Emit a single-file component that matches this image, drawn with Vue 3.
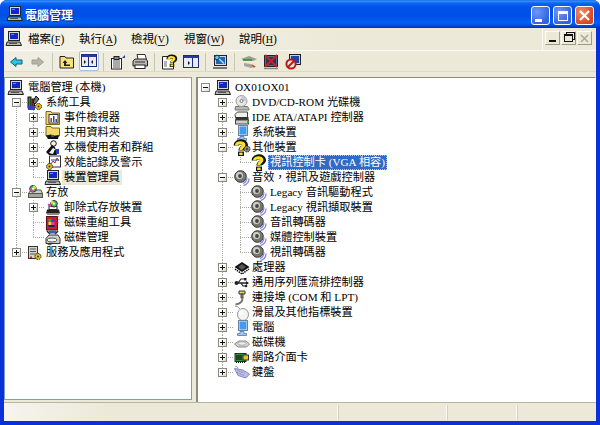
<script setup>
const gear = (x, y, c = '#e8c21c') => `<circle cx="${x}" cy="${y}" r="3" fill="${c}" stroke="#222" stroke-dasharray="1.5 .8"/><circle cx="${x}" cy="${y}" r="1" fill="#333"/>`
const computer = `<rect x="2.5" y="0.5" width="11" height="9" fill="#d6d6d6" stroke="#222"/><rect x="4" y="2" width="8" height="6" fill="#1226c4"/><rect x="5" y="3" width="3" height="1" fill="#5f8cf0"/><path d="M1 11h13l1.500 3.500H0z" fill="#b9b9b0" stroke="#222"/><rect x="3" y="12" width="8" height="1" fill="#555"/>`
const qm = (s = 1, dx = 0, dy = 0) => `<g transform="translate(${dx} ${dy}) scale(${s})"><path d="M3.200 5.600C3.200 .8 12.400 .8 12.400 5C12.400 8 8 7.600 8 10.400" fill="none" stroke="#111" stroke-width="5.200"/><rect x="5" y="11.600" width="6" height="4.400" fill="#111"/><path d="M3.400 5.400C3.800 2 11 2 11 5C11 7 7.800 7 7.800 10" fill="none" stroke="#ffe21e" stroke-width="3"/><rect x="6.200" y="12.600" width="3.400" height="2.400" fill="#ffe21e"/></g>`
const unknown = qm(1, 0, 0)
const speaker = `<circle cx="6.500" cy="6.500" r="5.800" fill="#77776f" stroke="#34342f"/><circle cx="5.500" cy="5.500" r="3.500" fill="#cfcfc8"/><circle cx="6" cy="6" r="1.900" fill="#45453f"/><path d="M12.800 7q.5 4.500-3.800 6.500M15 8.500q0 5.500-5.500 7" fill="none" stroke="#8986dc" stroke-width="1.300"/>`
const drive = `<path d="M1.500 8.500 4 5h10l1.500 3.500v4h-14z" fill="#cfcfc8" stroke="#55554f"/><rect x="1.500" y="8.500" width="14" height="4" fill="#a5a59d" stroke="#55554f"/>`
const cdTop = `<circle cx="6" cy="3.800" r="3.300" fill="#3cc46a" stroke="#333"/><path d="M6 .5a3.300 3.300 0 0 1 3.300 3.300H6z" fill="#e8d828"/><path d="M6 3.800H2.700A3.300 3.300 0 0 0 6 7.100z" fill="#d8479c"/><circle cx="6" cy="3.800" r="1" fill="#fff"/>`
const screen = `<rect x="4.500" y="0.500" width="9" height="10" fill="#e8eef8" stroke="#6f7fa0"/><rect x="5.500" y="1.500" width="7" height="8" fill="#3f9cf0"/><path d="M6 11.500h4v2h2.500v2h-9v-2H6z" fill="#9fc8f4" stroke="#6f8ab0"/>`
const icons = {
  computer,
  tools: `<rect x="1" y="2" width="3" height="11" fill="#3a7a3a" stroke="#111"/><rect x="5" y="4" width="2.500" height="9" fill="#c02525" stroke="#111"/><path d="M9 1l3 3-4 5-2-2z" fill="#777" stroke="#111"/><rect x="1" y="11" width="7" height="4" fill="#3640c0"/>${gear(11.500, 11.500)}`,
  event: `<path d="M1 1.500h5l1 1.500h7.500v11.500H1z" fill="#f4d96a" stroke="#7a6410"/><rect x="4" y="4.500" width="9" height="8.500" fill="#fff" stroke="#333"/><rect x="5.500" y="8" width="1.500" height="4" fill="#c02525"/><rect x="8" y="6" width="1.500" height="6" fill="#2a40c0"/><rect x="10.500" y="9" width="1.500" height="3" fill="#2a40c0"/>`,
  share: `<path d="M1 1.500h5l1 1.500h7.500v8H1z" fill="#f4d96a" stroke="#7a6410"/><path d="M1 10.500l5-1 3 1.500 5-1-1 4H3z" fill="#111"/><rect x="6" y="10" width="3" height="2" fill="#2a40c0"/>`,
  users: `<circle cx="8.500" cy="3.500" r="2.800" fill="#f4f0e0" stroke="#111"/><path d="M1 12 7 5l3 2 2 8H4z" fill="#111"/><path d="M4 13 8 8l2 1-2 5z" fill="#f5f5f5"/><rect x="11" y="9" width="3" height="5" fill="#2a40c0"/>`,
  perf: `<rect x="4.500" y="1" width="11" height="11" fill="#fff" stroke="#333"/><path d="M6 9l2-3 2 2 2-5 2 3" fill="none" stroke="#c02525"/><path d="M6 5h8" stroke="#2a40c0"/>${gear(4.500, 11.500)}`,
  storage: `${drive}${cdTop}`,
  removable: `<path d="M2 9.500h12l1 4H1z" fill="#222"/><rect x="4" y="6.500" width="8" height="3" fill="#fff" stroke="#222"/><rect x="2" y="13" width="12" height="2" fill="#8a8a82"/>${cdTop.replaceAll('cx="6"', 'cx="9"')}`,
  defrag: `<rect x="1.500" y="1.500" width="11" height="13.500" fill="#cc1f2e" stroke="#5c0f16"/><rect x="3.500" y="4" width="3" height="3" fill="#27b040"/><rect x="6.500" y="4" width="3" height="3" fill="#2a40d0"/><rect x="3.500" y="7" width="3" height="3" fill="#e8e028"/><rect x="6.500" y="7" width="3" height="3" fill="#e03cc0"/><rect x="3.500" y="10" width="6" height="2" fill="#1c1c6a"/><path d="M13 1v1M14 4v1M13 7v1" stroke="#e03cc0"/>`,
  diskmgmt: `<path d="M2 1l3 3M13 1l-3 3" stroke="#222" stroke-width="1.500"/><rect x="4" y="0.500" width="7" height="3" fill="#3060c0"/><path d="M1 8.500 4 5h9l2 3.500v5H1z" fill="#d0d0c8" stroke="#333"/><ellipse cx="7" cy="10" rx="5" ry="2" fill="#f4f4f0" stroke="#555"/><path d="M1 13l4 2 2-1.500" fill="none" stroke="#333"/>`,
  services: `<rect x="1.500" y="1.500" width="9" height="12" fill="#d4d4cc" stroke="#333"/><path d="M3 4h6M3 6.500h6M3 9h6" stroke="#555"/><rect x="3" y="11.500" width="2" height="1.500" fill="#c02525"/>${gear(11, 11.500)}`,
  dvd: `<path d="M1.500 11.500h12l1.500 2.500v1H1z" fill="#b8b8b0" stroke="#777"/><circle cx="7.500" cy="6" r="5.500" fill="#e8e8e4" stroke="#999"/><path d="M7.500.5a5.500 5.500 0 0 1 5.500 5.500H7.500z" fill="#c6c6d8"/><circle cx="7.500" cy="6" r="1.500" fill="#fff" stroke="#777"/>`,
  ide: `<path d="M1 4.500 3.500 2h10v5.500h-12z" fill="#f0f0ec" stroke="#444"/><rect x="1.500" y="7" width="13" height="3" fill="#333"/><rect x="1.500" y="10" width="13" height="4" fill="#cfcfc8" stroke="#444"/><rect x="13" y="11" width="2" height="2" fill="#2ab040"/>`,
  system: screen,
  unknown,
  unknownGear: `${qm(1, -1, 0)}${gear(13, 9, '#8a8a82')}`,
  sound: speaker,
  cpu: `<path d="M8 2 15.500 7 8 12 .5 7z" fill="#111"/><path d="M8 4l4 3-4 3-4-3z" fill="#555"/><path d="M1 9l7 5 7-5" fill="none" stroke="#111" stroke-width="1.500" stroke-dasharray="1.500 .8"/>`,
  usb: `<path d="M1 8h13" stroke="#222" stroke-width="1.500"/><path d="M15 8l-3-2v4z" fill="#222"/><path d="M4 8l3-4h3M7 8l2 3h2" fill="none" stroke="#222" stroke-width="1.200"/><rect x="10" y="3" width="2.500" height="2.500" fill="#222"/><circle cx="12" cy="11" r="1.300" fill="#222"/><circle cx="2.500" cy="8" r="2" fill="#222"/>`,
  port: `<path d="M5 1h6v3H5z" fill="#e6d44a" stroke="#333"/><path d="M7 4h2v4H7z" fill="#999" stroke="#444"/><path d="M8.500 8q.5 5-7 6.500" fill="none" stroke="#777" stroke-width="1.800"/>`,
  mouse: `<path d="M1 1q3 0 5 3" fill="none" stroke="#9a9a94"/><ellipse cx="9" cy="9.500" rx="5.500" ry="6" fill="#f4f4f2" stroke="#8e9299"/><ellipse cx="7" cy="7" rx="2" ry="2.500" fill="#fff"/>`,
  monitor: screen,
  disk: `<path d="M.5 9 5 6h7l3.500 3-3 3H4z" fill="#d6d6d0" stroke="#888"/><ellipse cx="8" cy="8.500" rx="4" ry="1.800" fill="#eee" stroke="#aaa"/>`,
  net: `<rect x="1" y="3.500" width="11" height="8" fill="#2f9a3c" stroke="#143a18"/><path d="M3 5v5M5 5v5M7 5v5" stroke="#111" stroke-width="1.200"/><rect x="9" y="5" width="5.500" height="5" fill="#e6c81e" stroke="#333"/><path d="M2 12.500h9" stroke="#111" stroke-dasharray="1 1"/>`,
  keyboard: `<path d="M.5 3.500 9 5l6.500 4-3.500 4L4 10.500z" fill="#bcbce6" stroke="#8a8ac0"/><path d="M3.500 5.500l7 2.500M3 7.500l7 3" stroke="#7a7ab8" stroke-dasharray="1 .7"/><path d="M1 1q3 0 3 3" fill="none" stroke="#9a9ac8"/>`,
  back: `<path d="M2.500 8 8 3.500v2.500h6v4H8v2.500z" fill="#26c8e6" stroke="#0c5f78"/>`,
  forward: `<path d="M13.500 8 8 3.500v2.500H2v4h6v2.500z" fill="#b5b4a8" stroke="#a09f94"/>`,
  up: `<path d="M1 2.500h5l1 1.500h7.500v10H1z" fill="#f8e27a" stroke="#222"/><path d="M6 6 3.500 9H5v3h6v-1.500H7V9h1.500z" fill="#222"/>`,
  tree: `<rect x="0.500" y="1.500" width="15" height="12" fill="#e8ebf6" stroke="#1f2a7a"/><rect x="1" y="2" width="14" height="2" fill="#2a3a9a"/><path d="M3 7l2 2-2 2zM12 7l-2 2 2 2z" fill="#111"/><path d="M7.500 4v9" stroke="#1f2a7a"/>`,
  props: `<rect x="1.500" y="4.500" width="10" height="10.500" fill="#fff" stroke="#222"/><path d="M3 7h7M3 9h7M3 11h7M3 13h7" stroke="#555"/><rect x="4" y="2.500" width="5" height="3" fill="#888" stroke="#222"/><path d="M12 4l3-3v3z" fill="#2a3a9a"/>`,
  print: `<path d="M5 .5h8l1.500 5H6z" fill="#fff" stroke="#333"/><path d="M1 7l2-2h11l1.500 2v5H1z" fill="#b8b8b0" stroke="#222"/><rect x="3" y="11" width="10" height="3.500" fill="#fff" stroke="#222"/><path d="M3 8h10" stroke="#333"/>`,
  help: `<path d="M1.500 2.500h8l3 3v9.500h-11z" fill="#fff" stroke="#222"/><path d="M3 8h3M3 10h3M3 12h3" stroke="#666"/>${qm(.75, 5, 1)}`,
  action: `<rect x="0.500" y="1.500" width="15" height="12" fill="#e8ebf6" stroke="#1f2a7a"/><rect x="1" y="2" width="14" height="2" fill="#2a3a9a"/><path d="M9.500 4v9" stroke="#1f2a7a"/><path d="M5 7l2 2-2 2z" fill="#111"/>`,
  scan: `<rect x="2.500" y="1.500" width="12" height="10" fill="#cfd6e6" stroke="#222"/><rect x="4" y="3" width="9" height="7" fill="#1e66c8"/><path d="M1 14h14" stroke="#777" stroke-width="2"/><path d="M12 9.500 5 3" stroke="#bde" stroke-width="1.600"/><circle cx="5" cy="3.500" r="2.300" fill="#5ad0e8" stroke="#135"/>`,
  update: `<path d="M0 5 8 2l8 3-4 2-4-1-4 1z" fill="#9aa088"/><path d="M2 6h9" stroke="#2a8a3a" stroke-width="1.400"/><path d="M3 9l7 1 5 3-5 1-7-2z" fill="#a8a498"/><path d="M11 11l3 2" stroke="#c0491e" stroke-width="1.500"/>`,
  remove: `<rect x="1.500" y="1.500" width="13" height="11" fill="#5c6a8a" stroke="#222"/><rect x="3" y="3" width="10" height="8" fill="#2a3560"/><path d="M2 1l12 12M14 1 2 13" stroke="#cc2020" stroke-width="2"/><path d="M1 14.500h14" stroke="#888" stroke-width="1.500"/>`,
  disable: `<rect x="4.500" y="0.500" width="11" height="10" fill="#c8cfe0" stroke="#222"/><rect x="6" y="2" width="8" height="7" fill="#1e44a8"/><circle cx="6" cy="10" r="4.600" fill="#f4e8e0" stroke="#b81818" stroke-width="2"/><path d="M3 13l6-6" stroke="#b81818" stroke-width="2"/>`
}

const left = [
  { t: '電腦管理 (本機)', i: 'computer', l: 0 },
  { t: '系統工具', i: 'tools', l: 1, e: '-' },
  { t: '事件檢視器', i: 'event', l: 2, e: '+' },
  { t: '共用資料夾', i: 'share', l: 2, e: '+' },
  { t: '本機使用者和群組', i: 'users', l: 2, e: '+' },
  { t: '效能記錄及警示', i: 'perf', l: 2, e: '+' },
  { t: '裝置管理員', i: 'computer', l: 2, sel: 'idle' },
  { t: '存放', i: 'storage', l: 1, e: '-' },
  { t: '卸除式存放裝置', i: 'removable', l: 2, e: '+' },
  { t: '磁碟重組工具', i: 'defrag', l: 2 },
  { t: '磁碟管理', i: 'diskmgmt', l: 2 },
  { t: '服務及應用程式', i: 'services', l: 1, e: '+' }
]
const right = [
  { t: 'OX01OX01', i: 'computer', l: 0, e: '-' },
  { t: 'DVD/CD-ROM 光碟機', i: 'dvd', l: 1, e: '+' },
  { t: 'IDE ATA/ATAPI 控制器', i: 'ide', l: 1, e: '+' },
  { t: '系統裝置', i: 'system', l: 1, e: '+' },
  { t: '其他裝置', i: 'unknownGear', l: 1, e: '-' },
  { t: '視訊控制卡 (VGA 相容)', i: 'unknown', l: 2, sel: 'active' },
  { t: '音效\uFF0C視訊及遊戲控制器', i: 'sound', l: 1, e: '-' },
  { t: 'Legacy 音訊驅動程式', i: 'sound', l: 2 },
  { t: 'Legacy 視訊擷取裝置', i: 'sound', l: 2 },
  { t: '音訊轉碼器', i: 'sound', l: 2 },
  { t: '媒體控制裝置', i: 'sound', l: 2 },
  { t: '視訊轉碼器', i: 'sound', l: 2 },
  { t: '處理器', i: 'cpu', l: 1, e: '+' },
  { t: '通用序列匯流排控制器', i: 'usb', l: 1, e: '+' },
  { t: '連接埠 (COM 和 LPT)', i: 'port', l: 1, e: '+' },
  { t: '滑鼠及其他指標裝置', i: 'mouse', l: 1, e: '+' },
  { t: '電腦', i: 'monitor', l: 1, e: '+' },
  { t: '磁碟機', i: 'disk', l: 1, e: '+' },
  { t: '網路介面卡', i: 'net', l: 1, e: '+' },
  { t: '鍵盤', i: 'keyboard', l: 1, e: '+' }
]

// Guide lines: which levels still have a later sibling below each row.
function withGuides(rows, xs) {
  return rows.map((r, idx) => {
    const v = []
    for (let l = 1; l <= r.l; l++) {
      let last = true
      for (let j = idx + 1; j < rows.length; j++) {
        if (rows[j].l < l) break
        if (rows[j].l === l) { last = false; break }
      }
      const first = l === 1 && idx === 1
      if (l === r.l) v.push({ x: xs[l], half: last, first, conn: true })
      else if (!last) v.push({ x: xs[l], half: false })
    }
    return { ...r, v }
  })
}
const panes = [
  { k: 'tree-left', rows: withGuides(left, [0, 11, 28]) },
  { k: 'tree-right', rows: withGuides(right, [0, 24, 42]) }
]
const menus = [
  ['檔案', 'F', 51], ['執行', 'A', 52], ['檢視', 'V', 53], ['視窗', 'W', 55], ['說明', 'H', 40]
]
const tools = [
  ['back', 'forward'], ['up', 'tree'], ['props', 'print'], ['help', 'action'], ['scan'], ['update', 'remove', 'disable']
]
</script>

<template>
  <div class="window">
    <header class="titlebar">
      <svg class="ico" viewBox="0 0 16 16" v-html="icons.computer"></svg>
      <span class="title">電腦管理</span>
      <div class="caps">
        <button class="cap"><i class="cap-min"></i></button>
        <button class="cap"><i class="cap-max"></i></button>
        <button class="cap close">
          <svg viewBox="0 0 11 11" width="11" height="11"><path d="M1 1l9 9M10 1 1 10" stroke="#fff" stroke-width="2.200"/></svg>
        </button>
      </div>
    </header>
    <div class="body">
      <nav class="menubar">
        <svg class="ico menu-ico" viewBox="0 0 16 16" v-html="icons.computer"></svg>
        <span v-for="m in menus" :key="m[0]" class="menu" :style="{ width: m[2] + 'px' }">{{ m[0] }}(<u>{{ m[1] }}</u>)</span>
        <div class="mdi">
          <button class="mini"><i class="mini-min"></i></button>
          <button class="mini"><i class="mini-rest"></i></button>
          <button class="mini off">
            <svg viewBox="0 0 9 9" width="9" height="9"><path d="M1 1l7 7M8 1 1 8" stroke="#aca899" stroke-width="1.500"/></svg>
          </button>
        </div>
      </nav>
      <div class="toolbar">
        <template v-for="(g, n) in tools" :key="n">
          <i v-if="n" class="sep"></i>
          <div class="tgroup">
            <span v-for="t in g" :key="t" class="tbtn" :class="{ on: t === 'tree' }">
              <svg class="ico" viewBox="0 0 16 16" v-html="icons[t]"></svg>
            </span>
          </div>
        </template>
      </div>
      <div class="band"></div>
      <main class="panes">
        <section v-for="p in panes" :key="p.k" class="pane" :class="p.k">
          <div v-for="r in p.rows" :key="r.t" class="row" :class="'lv' + r.l">
            <template v-for="g in r.v" :key="g.x">
              <i class="vg" :class="{ half: g.half, first: g.first }" :style="{ left: g.x + 'px' }"></i>
              <i v-if="g.conn" class="hg" :style="{ left: g.x + 'px' }"></i>
            </template>
            <span v-if="r.e" class="exp">
              <b></b><b v-if="r.e === '+'" class="plus"></b>
            </span>
            <svg class="ico node" viewBox="0 0 16 16" v-html="icons[r.i]"></svg>
            <span class="label" :class="r.sel">{{ r.t }}</span>
          </div>
        </section>
      </main>
      <footer class="status">
        <div class="cell grow"></div>
        <div class="cell mid"></div>
        <div class="cell end"></div>
      </footer>
    </div>
  </div>
</template>

<style>
html, body { margin: 0; background: #fff; }
</style>

<style scoped>
* { box-sizing: border-box; }
.window {
  width: 600px; height: 425px; display: flex; flex-direction: column;
  border-radius: 7px 7px 0 0; overflow: hidden;
  background: #0831d9;
  font: 12px/15px "Liberation Serif", "Noto Sans CJK TC", serif;
  color: #000;
}
.ico { width: 16px; height: 16px; display: block; flex: none; overflow: visible; }
.titlebar {
  height: 28px; flex: none; display: flex; align-items: center; padding: 0 6px 0 7px;
  background: linear-gradient(#0a5fe8 0, #3a93ff 1px, #0a6af0 3px, #0050ea 7px, #0050e8 16px, #0060f5 23px, #0048d8 26px, #0030b0 28px);
}
.title {
  margin-left: 2px; color: #fff; font-weight: 700; font-size: 12px;
  font-family: "Noto Sans CJK TC", sans-serif; text-shadow: 1px 1px 0 #0a2f9a;
}
.caps { margin-left: auto; display: flex; gap: 3px; margin-top: 3px; }
.cap {
  width: 19px; height: 19px; padding: 0; border: 1px solid #fff; border-radius: 3px;
  background: radial-gradient(circle at 30% 30%, #6f97f6, #2f62e0 75%);
  display: flex; align-items: center; justify-content: center; position: relative;
}
.cap-min { width: 7px; height: 3px; background: #fff; margin: 9px 5px 0 0; }
.cap-max { width: 10px; height: 10px; border: 1px solid #fff; border-top-width: 3px; }
.close { background: radial-gradient(circle at 30% 30%, #ee8e6a, #d9431d 75%); }
.body {
  flex: 1; margin: 0 4px 4px; display: flex; flex-direction: column; background: #ece9d8; min-height: 0;
}
.menubar {
  height: 23px; flex: none; display: flex; align-items: center; padding: 0 2px;
  background: linear-gradient(90deg, #f4f3ea, #ece9d8 60%);
  border-bottom: 1px solid #fbfaf5;
}
.menu-ico { margin-right: 6px; }
.menu { flex: none; white-space: nowrap; font-size: 11.500px; }
.menu u { text-decoration: none; border-bottom: 1px solid #333; font-size: 10px; }
.mdi {
  margin-left: auto; height: 100%; padding: 3px 2px; display: flex; gap: 1px;
  border-left: 1px solid #fbfaf5;
}
.mini {
  width: 15px; height: 14px; padding: 0; background: #ece9d8; display: flex;
  align-items: center; justify-content: center;
  border: 1px solid; border-color: #fff #9c9a8c #9c9a8c #fff;
}
.mini-min { width: 7px; height: 2px; background: #111; margin-top: 6px; }
.mini-rest {
  width: 9px; height: 8px; border: 1px solid #111; border-top-width: 2px;
  box-shadow: 2px -2px 0 -1px #ece9d8, 2px -2px 0 0 #111;
}
.toolbar {
  height: 20px; flex: none; display: flex; align-items: stretch; padding-left: 1px;
  background: linear-gradient(90deg, #f0eee2, #ece9d8 55%);
}
.tgroup { display: flex; }
.tbtn { width: 20px; margin: 0 1px; display: flex; align-items: center; justify-content: center; padding-top: 2px; }
.tbtn.on { background: #fbfaf6; border: 1px solid #a9c0d8; border-radius: 2px; padding-top: 0; }
.sep { width: 1px; height: 18px; background: #c9c6b4; margin: 2px 3px 0; flex: none; }
.band { height: 6px; flex: none; border-top: 1px solid #dcd9c6; background: #ece9d8; }
.panes { flex: 1; display: flex; gap: 4px; min-height: 0; background: #ece9d8; }
.pane { background: #fff; padding-top: 2px; overflow: hidden; position: relative; font-size: 11.200px; }
.tree-left { width: 188px; border: 1px solid #7f9db9; margin-bottom: 2px; }
.tree-right { flex: 1; border-left: 2px solid #8f8c7c; border-top: 1px solid #8f8c7c; border-right: 1px solid #fff; }
.row { height: 15px; display: flex; align-items: center; position: relative; white-space: nowrap; }
.tree-left .lv0 { padding-left: 3px; }
.tree-left .lv1 { padding-left: 22px; }
.tree-left .lv2 { padding-left: 40px; }
.tree-right .lv0 { padding-left: 17px; }
.tree-right .lv1 { padding-left: 36px; }
.tree-right .lv2 { padding-left: 53px; }
.node { position: relative; z-index: 1; }
.exp {
  position: absolute; z-index: 2; top: 3px; width: 9px; height: 9px; background: linear-gradient(135deg, #fff 40%, #d8d5c4);
  border: 1px solid #8a8a80;
}
.exp b { position: absolute; left: 1px; top: 3px; width: 5px; height: 1px; background: #111; }
.exp b.plus { left: 3px; top: 1px; width: 1px; height: 5px; }
.tree-left .lv1 .exp { left: 7px; }
.tree-left .lv2 .exp { left: 24px; }
.tree-right .lv0 .exp { left: 3px; }
.tree-right .lv1 .exp { left: 20px; }
.vg {
  position: absolute; top: 0; bottom: 0; width: 1px;
  background: repeating-linear-gradient(#a8a8a0 0 1px, transparent 1px 2px);
}
.vg.half { bottom: 7px; }
.vg.first { top: 7px; }
.hg {
  position: absolute; top: 7px; width: 11px; height: 1px;
  background: repeating-linear-gradient(90deg, #a8a8a0 0 1px, transparent 1px 2px);
}
.label { margin-left: 1px; padding: 0 2px; height: 15px; position: relative; z-index: 1; }
.tree-right .lv1 .label { margin-left: 0; }
.tree-right .lv0 .label, .tree-left .lv0 .label { margin-left: 2px; }
.idle { background: #ece9d8; }
.active { background: #316ac5; color: #fff; outline: 1px dotted #e0c080; outline-offset: -1px; }
.status { height: 19px; flex: none; display: flex; padding-top: 1px; border-top: 1px solid #b8b5a4; background: linear-gradient(90deg, #f5f4ee, #ece9d8 18%); }
.cell { border-right: 1px solid #fbfaf5; box-shadow: 1px 0 0 #d4d0bf; margin: 1px 0; }
.grow { width: 334px; }
.mid { width: 109px; }
.end { width: 70px; }
</style>
